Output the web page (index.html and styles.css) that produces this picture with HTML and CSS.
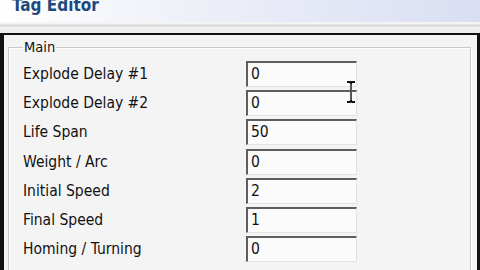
FILE: index.html
```html
<!DOCTYPE html>
<html lang="en">
<head>
    <meta charset="UTF-8">
    <title>Tag Editor</title>
    <link rel="stylesheet" href="styles.css">
</head>
<body>
    <div class="titlebar">
        <span class="title">Tag Editor</span>
    </div>
    <div class="menu-strip"></div>
    <div class="window">
        <fieldset class="group">
            <legend>Main</legend>
            <div class="row"><label>Explode Delay #1</label><div class="field">0</div></div>
            <div class="row"><label>Explode Delay #2</label><div class="field">0</div></div>
            <div class="row"><label>Life Span</label><div class="field">50</div></div>
            <div class="row"><label>Weight / Arc</label><div class="field">0</div></div>
            <div class="row"><label>Initial Speed</label><div class="field">2</div></div>
            <div class="row"><label>Final Speed</label><div class="field">1</div></div>
            <div class="row"><label>Homing / Turning</label><div class="field">0</div></div>
        </fieldset>
        <svg class="cursor" width="10" height="22" viewBox="0 0 10 22">
            <path d="M1 1h3l1 1 1-1h3M5 2v18M1 21h3l1-1 1 1h3" fill="none" stroke="#111" stroke-width="2"/>
            <path d="M5 3v16" stroke="#fff" stroke-width="0.6"/>
        </svg>
    </div>
</body>
</html>
```

FILE: styles.css
```css
body {
    margin: 0;
    width: 480px;
    height: 270px;
    overflow: hidden;
    background-color: #f3f3f3;
    font-family: "DejaVu Sans", sans-serif;
    font-stretch: condensed;
}
.titlebar {
    height: 22px;
    background: linear-gradient(to right, #ffffff 0%, #eef0f8 40%, #d9def3 100%);
    position: relative;
    overflow: hidden;
}
.title {
    position: absolute;
    left: 12px;
    top: -5px;
    font-weight: bold;
    font-size: 17px;
    color: #1d4a7c;
}
.menu-strip {
    height: 11px;
    background: linear-gradient(to bottom, #f4f4f4 0px, #f4f4f4 2px, #d6d6d6 3px, #d6d6d6 4px, #f2f2f2 5px, #ececec 11px);
    border-bottom: 2px solid #111;
}
.window {
    position: relative;
    height: 235px;
    overflow: hidden;
    border-left: 4px solid #111;
    border-right: 3px solid #111;
    padding: 4px 6px 0 4px;
    background-color: #f4f4f4;
}
.group {
    margin: 0;
    padding: 4px 0 0 14px;
    border: 1px solid #c9c9c9;
    box-shadow: inset 1px 1px 0 #fff, 1px 1px 0 #fff;
    height: 240px;
}
.group legend {
    font-size: 14.5px;
    color: #111;
    padding: 0 1px;
    margin-left: 0;
}
.row {
    display: flex;
    align-items: center;
    height: 29.3px;
}
.row label {
    width: 223px;
    font-size: 15.5px;
    color: #111;
}
.field {
    width: 105px;
    height: 23px;
    border-top: 2px solid #5e5e5e;
    border-left: 2px solid #5e5e5e;
    border-bottom: 1px solid #e2e2e2;
    border-right: 1px solid #e2e2e2;
    background-color: #fbfbfb;
    font-size: 15.5px;
    line-height: 23px;
    padding-left: 3px;
    color: #111;
}
.cursor {
    position: absolute;
    left: 342px;
    top: 46px;
}
```
